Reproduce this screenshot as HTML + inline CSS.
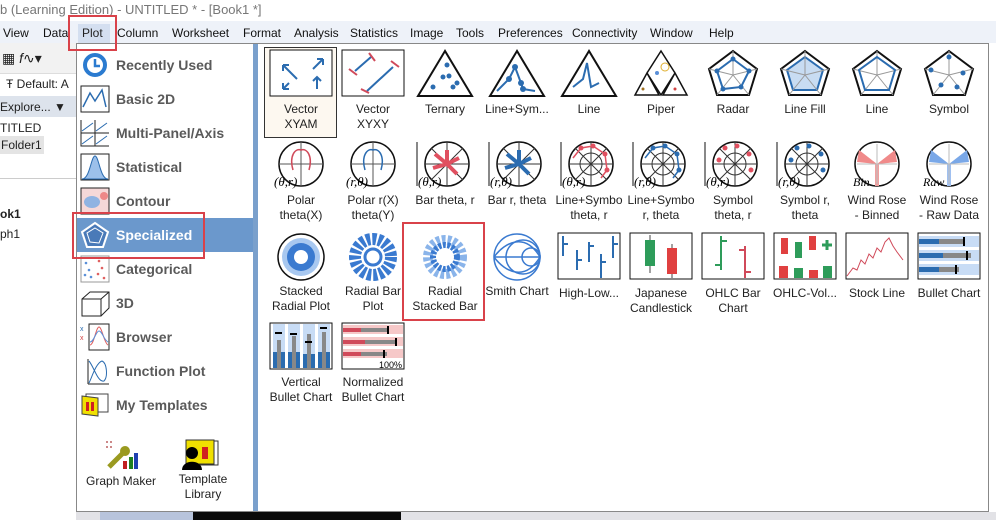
<!DOCTYPE html>
<html><head><meta charset="utf-8"><style>
*{margin:0;padding:0;box-sizing:border-box}
body{width:996px;height:520px;overflow:hidden;background:#fff;font-family:"Liberation Sans",sans-serif;position:relative;font-size:12px;color:#222}
.a{position:absolute}
.menu span{position:absolute;top:26px;font-size:12px;color:#111}
.li{position:absolute;left:80px;width:30px;height:28px}
.lt{position:absolute;left:116px;font-weight:bold;font-size:14px;color:#5a5a5a}
.cell{position:absolute;width:72px;text-align:center;font-size:12px;color:#222;line-height:15px}
.cell svg{display:block;margin:0 auto}
.red{position:absolute;border:2px solid #d9424a}
</style></head><body>
<div class="a" style="left:0;top:0;width:996px;height:20px;background:#fff;color:#777;font-size:13px;padding:2px 0 0 0">b (Learning Edition) - UNTITLED * - [Book1 *]</div>
<div class="a" style="left:0;top:21px;width:996px;height:22px;background:#eef2f9"></div>
<div class="menu">
<span style="left:3px">View</span><span style="left:43px">Data</span><span style="left:82px">Plot</span><span style="left:117px">Column</span><span style="left:172px">Worksheet</span><span style="left:243px">Format</span><span style="left:294px">Analysis</span><span style="left:350px">Statistics</span><span style="left:410px">Image</span><span style="left:456px">Tools</span><span style="left:498px">Preferences</span><span style="left:572px">Connectivity</span><span style="left:650px">Window</span><span style="left:709px">Help</span>
</div>
<div class="a" style="left:78px;top:24px;width:32px;height:19px;background:#d4dff0"></div>
<span class="a" style="left:82px;top:26px;font-size:12px">Plot</span>
<div class="a" style="left:0;top:43px;width:76px;height:30px;background:#f2f2f2"></div>
<div class="a" style="left:2px;top:50px;font-size:14px">▦ <i>f</i>∿▾</div>
<div class="a" style="left:0;top:73px;width:76px;height:22px;background:#fff;border-top:1px solid #ddd"></div>
<div class="a" style="left:6px;top:77px;font-size:12px">Ŧ Default: A</div>
<div class="a" style="left:0;top:96px;width:76px;height:21px;background:#dde3ec"></div>
<div class="a" style="left:0;top:100px;font-size:12px">Explore... ▼</div>
<div class="a" style="left:0;top:121px;font-size:12px">TITLED</div>
<div class="a" style="left:0;top:136px;width:44px;height:18px;background:#e4e4e4"></div>
<div class="a" style="left:1px;top:138px;font-size:12px">Folder1</div>
<div class="a" style="left:0;top:178px;width:76px;height:1px;background:#ccc"></div>
<div class="a" style="left:0;top:207px;font-size:12px;font-weight:bold">ok1</div>
<div class="a" style="left:0;top:227px;font-size:12px">ph1</div>
<div class="a" style="left:76px;top:512px;width:920px;height:8px;background:#e2e2e6"></div>
<div class="a" style="left:100px;top:512px;width:93px;height:8px;background:#b8c4dc"></div>
<div class="a" style="left:193px;top:512px;width:208px;height:8px;background:#0a0a0a"></div>
<div class="a" style="left:76px;top:43px;width:913px;height:469px;background:#fff;border:1px solid #888"></div>
<div class="a" style="left:253px;top:44px;width:5px;height:467px;background:#7aa0cc"></div>
<div class="a" style="left:77px;top:218px;width:176px;height:34px;background:#6b98cc"></div>
<svg class="li" style="top:51px" viewBox="0 0 30 28"><circle cx="15" cy="14" r="10" fill="none" stroke="#2b7bd0" stroke-width="4"/><path d="M15 8v7h5" stroke="#2b7bd0" stroke-width="2.5" fill="none"/></svg>
<div class="lt" style="top:57px">Recently Used</div>
<svg class="li" style="top:85px" viewBox="0 0 30 28"><rect x="1" y="1" width="28" height="26" fill="#fff" stroke="#222"/><path d="M3 22 L10 8 L15 16 L22 5 L26 22" stroke="#2b6cb0" fill="none" stroke-width="1.5"/></svg>
<div class="lt" style="top:91px">Basic 2D</div>
<svg class="li" style="top:119px" viewBox="0 0 30 28"><path d="M1 1v26h28M15 1v26M1 14h28" stroke="#222" fill="none"/><path d="M2 12l11-8M2 25l11-8M16 12l11-8M16 25l11-8" stroke="#2b6cb0" fill="none"/></svg>
<div class="lt" style="top:125px">Multi-Panel/Axis</div>
<svg class="li" style="top:153px" viewBox="0 0 30 28"><rect x="1" y="1" width="28" height="26" fill="#fff" stroke="#222"/><path d="M2 26 C10 26 11 3 15 3 C19 3 20 26 28 26Z" fill="#9cc0ea" stroke="#2b6cb0"/></svg>
<div class="lt" style="top:159px">Statistical</div>
<svg class="li" style="top:187px" viewBox="0 0 30 28"><rect x="1" y="1" width="28" height="26" fill="#f5d8d8" stroke="#222"/><ellipse cx="12" cy="15" rx="8" ry="6" fill="#8fb3e2"/><ellipse cx="24" cy="9" rx="4" ry="4" fill="#e88"/></svg>
<div class="lt" style="top:193px">Contour</div>
<svg class="li" style="top:221px" viewBox="0 0 30 28"><path d="M15 2 L28 11 L23 26 L7 26 L2 11Z" fill="#4a7ab8" stroke="#fff" stroke-width="2"/><path d="M15 7 L23 12 L19 22 L10 21 L7 12Z" fill="none" stroke="#fff"/></svg>
<div class="lt" style="top:227px;color:#fff">Specialized</div>
<svg class="li" style="top:255px" viewBox="0 0 30 28"><rect x="1" y="1" width="28" height="26" fill="#fff" stroke="#999"/><g fill="#5a8fd8"><circle cx="6" cy="8" r="1.3"/><circle cx="9" cy="15" r="1.3"/><circle cx="5" cy="20" r="1.3"/><circle cx="11" cy="22" r="1.3"/></g><g fill="#e06060"><circle cx="19" cy="6" r="1.3"/><circle cx="22" cy="13" r="1.3"/><circle cx="18" cy="19" r="1.3"/><circle cx="24" cy="23" r="1.3"/></g></svg>
<div class="lt" style="top:261px">Categorical</div>
<svg class="li" style="top:289px" viewBox="0 0 30 28"><path d="M2 10 L10 3 L29 3 L29 19 L21 27 L2 27Z M2 10 L21 10 L21 27 M21 10 L29 3" fill="#fff" stroke="#222"/></svg>
<div class="lt" style="top:295px">3D</div>
<svg class="li" style="top:323px" viewBox="0 0 30 28"><rect x="9" y="1" width="20" height="26" fill="#fff" stroke="#222"/><path d="M10 22 C14 22 16 4 19 4 C22 4 24 20 28 22" stroke="#e06060" fill="none"/><path d="M10 19 C14 19 16 8 19 8 C22 8 24 17 28 19" stroke="#5a8fd8" fill="none"/><text x="0" y="8" font-size="7" fill="#2b6cb0">x</text><text x="0" y="17" font-size="7" fill="#d04040">x</text></svg>
<div class="lt" style="top:329px">Browser</div>
<svg class="li" style="top:357px" viewBox="0 0 30 28"><path d="M8 27H29M8 2v25" stroke="#222" fill="none"/><path d="M9 4 C14 10 18 26 24 24 C28 20 27 6 22 4 C16 6 12 20 9 26" stroke="#2b6cb0" fill="none"/></svg>
<div class="lt" style="top:363px">Function Plot</div>
<svg class="li" style="top:391px" viewBox="0 0 30 28"><rect x="6" y="3" width="22" height="18" fill="#fff" stroke="#444"/><path d="M2 5 L18 7 L18 25 L2 23Z" fill="#f0e000" stroke="#444"/><rect x="6" y="11" width="3" height="9" fill="#d02020"/><rect x="11" y="11" width="3" height="9" fill="#d02020"/></svg>
<div class="lt" style="top:397px">My Templates</div>
<svg class="a" style="left:103px;top:439px" width="36" height="32" viewBox="0 0 36 32"><g fill="#c88"><rect x="3" y="2" width="2" height="2"/><rect x="7" y="2" width="2" height="2"/><rect x="3" y="7" width="2" height="2"/><rect x="7" y="7" width="2" height="2"/></g><path d="M6 28 L20 14" stroke="#9a9a20" stroke-width="5"/><circle cx="22" cy="12" r="5" fill="#9a9a20"/><rect x="20" y="22" width="4" height="8" fill="#c02020"/><rect x="26" y="18" width="4" height="12" fill="#208020"/><rect x="31" y="14" width="4" height="16" fill="#2040b0"/></svg>
<div class="a" style="left:86px;top:474px;font-size:12px">Graph Maker</div>
<svg class="a" style="left:180px;top:439px" width="40" height="32" viewBox="0 0 40 32"><rect x="10" y="2" width="28" height="24" fill="#fff" stroke="#333"/><rect x="6" y="1" width="28" height="24" fill="#f0e000" stroke="#333"/><rect x="22" y="8" width="6" height="12" fill="#d02020"/><circle cx="12" cy="14" r="6" fill="#000"/><path d="M2 31 C2 20 22 20 22 31Z" fill="#000"/></svg>
<div class="a" style="left:178px;top:472px;font-size:12px;text-align:center;width:50px;line-height:15px">Template Library</div>
<div class="a" style="left:264px;top:47px;width:73px;height:91px;border:1px solid #333;background:#fdf8f0"></div>
<!-- row 1 -->
<div class="cell" style="left:265px;top:49px"><svg width="64" height="48"><rect x="1" y="1" width="62" height="46" fill="#fff" stroke="#111"/><g stroke="#2b6cb0" stroke-width="2" fill="none"><path d="M28 30 L14 16M14 16v6M14 16h6M44 20 L54 10M54 10v6M54 10h-6M14 40 L20 34M14 40h6M14 40v-6M48 40 L48 28M44 32l4-4 4 4"/></g></svg><div style="margin-top:5px">Vector<br>XYAM</div></div>
<div class="cell" style="left:337px;top:49px"><svg width="64" height="48"><rect x="1" y="1" width="62" height="46" fill="#fff" stroke="#111"/><g stroke="#2b6cb0" stroke-width="2"><path d="M14 22 L30 8M26 42 L52 18"/></g><g stroke="#d04a5a" stroke-width="2"><path d="M8 20l8 6M28 4l6 8M20 40l8 4M50 12l8 6"/></g></svg><div style="margin-top:5px">Vector<br>XYXY</div></div>
<div class="cell" style="left:409px;top:49px"><svg width="64" height="48"><path d="M32 2 L5 47 L59 47Z" fill="#fff" stroke="#111" stroke-width="2"/><g fill="#2b6cb0"><circle cx="34" cy="16" r="2.5"/><circle cx="30" cy="28" r="2.5"/><circle cx="36" cy="27" r="2.5"/><circle cx="20" cy="38" r="2.5"/><circle cx="40" cy="38" r="2.5"/><circle cx="44" cy="34" r="2.5"/></g></svg><div style="margin-top:5px">Ternary</div></div>
<div class="cell" style="left:481px;top:49px"><svg width="64" height="48"><path d="M32 2 L5 47 L59 47Z" fill="#fff" stroke="#111" stroke-width="2"/><path d="M12 42 L24 30 L30 18 L36 34 L38 40 L50 42" stroke="#2b6cb0" stroke-width="2" fill="none"/><g fill="#2b6cb0"><circle cx="24" cy="30" r="3"/><circle cx="30" cy="18" r="3"/><circle cx="36" cy="34" r="3"/><circle cx="38" cy="40" r="3"/></g></svg><div style="margin-top:5px">Line+Sym...</div></div>
<div class="cell" style="left:553px;top:49px"><svg width="64" height="48"><path d="M32 2 L5 47 L59 47Z" fill="#fff" stroke="#111" stroke-width="2"/><path d="M16 38 L26 30 L30 14 L34 38 L42 34" stroke="#2b6cb0" stroke-width="2" fill="none"/></svg><div style="margin-top:5px">Line</div></div>
<div class="cell" style="left:625px;top:49px"><svg width="64" height="48"><path d="M32 2 L46 24 L32 46 L18 24Z M18 24 L6 46 L30 46Z M46 24 L34 46 L58 46Z" fill="#fff" stroke="#111" stroke-width="1.5"/><circle cx="36" cy="18" r="4" fill="none" stroke="#e0b030"/><circle cx="28" cy="24" r="2" fill="#5a8fd8"/><circle cx="14" cy="40" r="1.5" fill="#a07020"/><circle cx="46" cy="40" r="1.5" fill="#d04040"/></svg><div style="margin-top:5px">Piper</div></div>
<div class="cell" style="left:697px;top:49px"><svg width="64" height="48"><path d="M32 2 L56 20 L48 46 L16 46 L8 20Z" fill="#fff" stroke="#111" stroke-width="2"/><path d="M32 2v24M56 20L32 26M48 46L32 26M16 46L32 26M8 20L32 26" stroke="#999"/><path d="M32 10 L48 22 L40 38 L22 40 L16 22Z" fill="none" stroke="#2b6cb0" stroke-width="2"/><g fill="#2b6cb0"><circle cx="32" cy="10" r="2.5"/><circle cx="48" cy="22" r="2.5"/><circle cx="40" cy="38" r="2.5"/><circle cx="22" cy="40" r="2.5"/><circle cx="16" cy="22" r="2.5"/></g></svg><div style="margin-top:5px">Radar</div></div>
<div class="cell" style="left:769px;top:49px"><svg width="64" height="48"><path d="M32 2 L56 20 L48 46 L16 46 L8 20Z" fill="#fff" stroke="#111" stroke-width="2"/><path d="M32 8 L50 21 L44 41 L20 41 L14 21Z" fill="#c8dcf2" stroke="#2b6cb0" stroke-width="2"/><path d="M32 2v24M56 20L32 26M48 46L32 26M16 46L32 26M8 20L32 26" stroke="#999"/></svg><div style="margin-top:5px">Line Fill</div></div>
<div class="cell" style="left:841px;top:49px"><svg width="64" height="48"><path d="M32 2 L56 20 L48 46 L16 46 L8 20Z" fill="#fff" stroke="#111" stroke-width="2"/><path d="M32 2v24M56 20L32 26M48 46L32 26M16 46L32 26M8 20L32 26" stroke="#999"/><path d="M32 8 L50 21 L44 41 L20 41 L14 21Z" fill="none" stroke="#2b6cb0" stroke-width="2"/></svg><div style="margin-top:5px">Line</div></div>
<div class="cell" style="left:913px;top:49px"><svg width="64" height="48"><path d="M32 2 L56 20 L48 46 L16 46 L8 20Z" fill="#fff" stroke="#111" stroke-width="2"/><path d="M32 2v24M56 20L32 26M48 46L32 26M16 46L32 26M8 20L32 26" stroke="#999"/><g fill="#2b6cb0"><circle cx="32" cy="8" r="2.5"/><circle cx="46" cy="24" r="2.5"/><circle cx="40" cy="38" r="2.5"/><circle cx="24" cy="36" r="2.5"/><circle cx="14" cy="21" r="2.5"/></g></svg><div style="margin-top:5px">Symbol</div></div>
<!-- row 2 -->
<div class="cell" style="left:265px;top:140px"><svg width="64" height="50"><circle cx="32" cy="24" r="22" fill="#fff" stroke="#111" stroke-width="1.5"/><path d="M32 2v44M10 24h44" stroke="#555"/><path d="M24 30 C20 16 26 8 32 10 C38 8 44 16 40 30" stroke="#d04a5a" fill="none" stroke-width="1.5"/><text x="5" y="46" font-size="13" font-style="italic" font-family="Liberation Serif">(θ,r)</text></svg><div style="margin-top:3px">Polar<br>theta(X)</div></div>
<div class="cell" style="left:337px;top:140px"><svg width="64" height="50"><circle cx="32" cy="24" r="22" fill="#fff" stroke="#111" stroke-width="1.5"/><path d="M32 2v44M10 24h44" stroke="#555"/><path d="M24 30 C20 16 26 8 32 10 C38 8 44 16 40 30" stroke="#2b6cb0" fill="none" stroke-width="1.5"/><text x="5" y="46" font-size="13" font-style="italic" font-family="Liberation Serif">(r,θ)</text></svg><div style="margin-top:3px">Polar r(X)<br>theta(Y)</div></div>
<div class="cell" style="left:409px;top:140px"><svg width="64" height="50"><path d="M4 2v44" stroke="#111"/><circle cx="34" cy="24" r="22" fill="#fff" stroke="#111" stroke-width="1.5"/><path d="M34 2v44M12 24h44M18 8l32 32M50 8L18 40" stroke="#333"/><g stroke="#e05060" stroke-width="4"><path d="M34 24 L22 14M34 24 L46 18M34 24 L20 28M34 24 L44 34M34 24V10"/></g><text x="5" y="46" font-size="13" font-style="italic" font-family="Liberation Serif">(θ,r)</text></svg><div style="margin-top:3px">Bar theta, r</div></div>
<div class="cell" style="left:481px;top:140px"><svg width="64" height="50"><path d="M4 2v44" stroke="#111"/><circle cx="34" cy="24" r="22" fill="#fff" stroke="#111" stroke-width="1.5"/><path d="M34 2v44M12 24h44M18 8l32 32M50 8L18 40" stroke="#333"/><g stroke="#2b6cb0" stroke-width="4"><path d="M34 24 L22 14M34 24 L46 18M34 24 L20 28M34 24 L44 34M34 24V10"/></g><text x="5" y="46" font-size="13" font-style="italic" font-family="Liberation Serif">(r,θ)</text></svg><div style="margin-top:3px">Bar r, theta</div></div>
<div class="cell" style="left:553px;top:140px"><svg width="64" height="50"><path d="M4 2v44" stroke="#111"/><circle cx="34" cy="24" r="22" fill="#fff" stroke="#111" stroke-width="1.5"/><path d="M34 2v44M12 24h44M18 8l32 32M50 8L18 40" stroke="#333"/><circle cx="34" cy="24" r="11" fill="none" stroke="#333"/><path d="M16 18 L24 8 L36 6 L48 14 L50 30 L44 38" stroke="#e05060" fill="none" stroke-width="1.5"/><g fill="#e05060"><circle cx="24" cy="8" r="2.5"/><circle cx="36" cy="6" r="2.5"/><circle cx="48" cy="14" r="2.5"/><circle cx="50" cy="30" r="2.5"/></g><text x="5" y="46" font-size="13" font-style="italic" font-family="Liberation Serif">(θ,r)</text></svg><div style="margin-top:3px;white-space:nowrap;overflow:hidden">Line+Symbo<br>theta, r</div></div>
<div class="cell" style="left:625px;top:140px"><svg width="64" height="50"><path d="M4 2v44" stroke="#111"/><circle cx="34" cy="24" r="22" fill="#fff" stroke="#111" stroke-width="1.5"/><path d="M34 2v44M12 24h44M18 8l32 32M50 8L18 40" stroke="#333"/><circle cx="34" cy="24" r="11" fill="none" stroke="#333"/><path d="M16 18 L24 8 L36 6 L48 14 L50 30 L44 38" stroke="#2b6cb0" fill="none" stroke-width="1.5"/><g fill="#2b6cb0"><circle cx="24" cy="8" r="2.5"/><circle cx="36" cy="6" r="2.5"/><circle cx="48" cy="14" r="2.5"/><circle cx="50" cy="30" r="2.5"/></g><text x="5" y="46" font-size="13" font-style="italic" font-family="Liberation Serif">(r,θ)</text></svg><div style="margin-top:3px;white-space:nowrap;overflow:hidden">Line+Symbo<br>r, theta</div></div>
<div class="cell" style="left:697px;top:140px"><svg width="64" height="50"><path d="M4 2v44" stroke="#111"/><circle cx="34" cy="24" r="22" fill="#fff" stroke="#111" stroke-width="1.5"/><path d="M34 2v44M12 24h44M18 8l32 32M50 8L18 40" stroke="#333"/><circle cx="34" cy="24" r="11" fill="none" stroke="#333"/><g fill="#e05060"><circle cx="24" cy="8" r="2.5"/><circle cx="36" cy="6" r="2.5"/><circle cx="48" cy="14" r="2.5"/><circle cx="50" cy="30" r="2.5"/><circle cx="18" cy="20" r="2.5"/></g><text x="5" y="46" font-size="13" font-style="italic" font-family="Liberation Serif">(θ,r)</text></svg><div style="margin-top:3px">Symbol<br>theta, r</div></div>
<div class="cell" style="left:769px;top:140px"><svg width="64" height="50"><path d="M4 2v44" stroke="#111"/><circle cx="34" cy="24" r="22" fill="#fff" stroke="#111" stroke-width="1.5"/><path d="M34 2v44M12 24h44M18 8l32 32M50 8L18 40" stroke="#333"/><circle cx="34" cy="24" r="11" fill="none" stroke="#333"/><g fill="#2b6cb0"><circle cx="24" cy="8" r="2.5"/><circle cx="36" cy="6" r="2.5"/><circle cx="48" cy="14" r="2.5"/><circle cx="50" cy="30" r="2.5"/><circle cx="18" cy="20" r="2.5"/></g><text x="5" y="46" font-size="13" font-style="italic" font-family="Liberation Serif">(r,θ)</text></svg><div style="margin-top:3px">Symbol r,<br>theta</div></div>
<div class="cell" style="left:841px;top:140px"><svg width="64" height="50"><circle cx="32" cy="24" r="22" fill="#fff" stroke="#111" stroke-width="1.5"/><path d="M32 24 L14 10 L12 22Z M32 24 L50 10 L52 22Z" fill="#f08a8a"/><path d="M30 24h4v22h-4Z" fill="#f0a0a0"/><path d="M32 4v40M12 24h40" stroke="#bbb"/><text x="8" y="46" font-size="12" font-style="italic" font-family="Liberation Serif">Bin</text></svg><div style="margin-top:3px">Wind Rose<br>- Binned</div></div>
<div class="cell" style="left:913px;top:140px"><svg width="64" height="50"><circle cx="32" cy="24" r="22" fill="#fff" stroke="#111" stroke-width="1.5"/><path d="M32 24 L14 10 L12 22Z M32 24 L50 10 L52 22Z" fill="#7aa8e8"/><path d="M30 24h4v22h-4Z" fill="#a0c0f0"/><path d="M32 4v40M12 24h40" stroke="#bbb"/><text x="6" y="46" font-size="12" font-style="italic" font-family="Liberation Serif">Raw</text></svg><div style="margin-top:3px">Wind Rose<br>- Raw Data</div></div>
<!-- row 3 -->
<div class="cell" style="left:265px;top:232px"><svg width="64" height="50"><circle cx="32" cy="25" r="23" fill="#fff" stroke="#111" stroke-width="1.5"/><circle cx="32" cy="25" r="19" fill="#a8c8f0"/><circle cx="32" cy="25" r="14" fill="#3a7ad0"/><circle cx="32" cy="25" r="7" fill="#fff"/></svg><div style="margin-top:2px">Stacked<br>Radial Plot</div></div>
<div class="cell" style="left:337px;top:232px"><svg width="64" height="50"><circle cx="32" cy="25" r="18" fill="none" stroke="#3a7ad0" stroke-width="12" stroke-dasharray="4 2"/><circle cx="32" cy="25" r="8" fill="#fff" stroke="#3a7ad0" stroke-width="3"/></svg><div style="margin-top:2px">Radial Bar<br>Plot</div></div>
<div class="cell" style="left:409px;top:232px"><svg width="64" height="50"><circle cx="32" cy="25" r="17" fill="none" stroke="#8ab4ea" stroke-width="10" stroke-dasharray="3.5 2"/><circle cx="32" cy="25" r="12" fill="none" stroke="#3a7ad0" stroke-width="6" stroke-dasharray="3 1.5"/><circle cx="32" cy="25" r="7" fill="#fff"/></svg><div style="margin-top:2px">Radial<br>Stacked Bar</div></div>
<div class="cell" style="left:481px;top:232px"><svg width="64" height="50"><g fill="none" stroke="#3a7ad0" stroke-width="1.5"><circle cx="32" cy="25" r="23"/><circle cx="38" cy="25" r="17"/><circle cx="46" cy="25" r="9"/><path d="M9 25h46M55 25 C40 0 20 10 9 25M55 25C40 50 20 40 9 25"/></g></svg><div style="margin-top:2px">Smith Chart</div></div>
<div class="cell" style="left:553px;top:232px"><svg width="64" height="48"><rect x="1" y="1" width="62" height="46" fill="#fff" stroke="#111"/><g stroke="#2b6cb0" stroke-width="2"><path d="M6 4v20M6 12h5M20 18v20M20 28h5M32 10v20M32 14h5M44 22v24M44 30h5M56 4v22M56 12h5"/></g></svg><div style="margin-top:6px">High-Low...</div></div>
<div class="cell" style="left:625px;top:232px"><svg width="64" height="48"><rect x="1" y="1" width="62" height="46" fill="#fff" stroke="#111"/><path d="M21 3v38M43 12v34" stroke="#444"/><rect x="16" y="8" width="10" height="26" fill="#2e9c5a"/><rect x="38" y="16" width="10" height="26" fill="#e04040"/></svg><div style="margin-top:6px">Japanese<br>Candlestick</div></div>
<div class="cell" style="left:697px;top:232px"><svg width="64" height="48"><rect x="1" y="1" width="62" height="46" fill="#fff" stroke="#111"/><g stroke="#2e9c5a" stroke-width="2"><path d="M20 4v34M20 9h6M20 33h-6"/></g><g stroke="#d04a5a" stroke-width="2"><path d="M44 14v32M44 18h-6M44 40h6"/></g></svg><div style="margin-top:6px">OHLC Bar<br>Chart</div></div>
<div class="cell" style="left:769px;top:232px"><svg width="64" height="48"><rect x="1" y="1" width="62" height="46" fill="#fff" stroke="#111"/><rect x="8" y="6" width="7" height="16" fill="#e04040"/><rect x="22" y="10" width="7" height="16" fill="#2e9c5a"/><rect x="36" y="4" width="7" height="14" fill="#e04040"/><path d="M54 8v10M49 13h10" stroke="#2e9c5a" stroke-width="3"/><rect x="6" y="34" width="9" height="12" fill="#e04040"/><rect x="21" y="36" width="9" height="10" fill="#2e9c5a"/><rect x="36" y="38" width="9" height="8" fill="#e04040"/><rect x="50" y="34" width="9" height="12" fill="#2e9c5a"/></svg><div style="margin-top:6px">OHLC-Vol...</div></div>
<div class="cell" style="left:841px;top:232px"><svg width="64" height="48"><rect x="1" y="1" width="62" height="46" fill="#fff" stroke="#111"/><path d="M2 44 L8 36 L12 38 L16 28 L20 32 L24 22 L28 26 L32 16 L36 20 L40 10 L44 6 L48 14 L52 20 L58 28" stroke="#d04a5a" fill="none"/></svg><div style="margin-top:6px">Stock Line</div></div>
<div class="cell" style="left:913px;top:232px"><svg width="64" height="48"><rect x="1" y="1" width="62" height="46" fill="#fff" stroke="#111"/><g><rect x="2" y="4" width="60" height="11" fill="#c8dcf5"/><rect x="2" y="18" width="60" height="11" fill="#c8dcf5"/><rect x="2" y="32" width="60" height="11" fill="#c8dcf5"/><rect x="2" y="7" width="45" height="5" fill="#888"/><rect x="2" y="21" width="52" height="5" fill="#888"/><rect x="2" y="35" width="40" height="5" fill="#888"/><rect x="2" y="7" width="20" height="5" fill="#2b6cb0"/><rect x="2" y="21" width="24" height="5" fill="#2b6cb0"/><rect x="2" y="35" width="20" height="5" fill="#2b6cb0"/><rect x="46" y="5" width="2" height="9" fill="#000"/><rect x="49" y="19" width="2" height="9" fill="#000"/><rect x="38" y="33" width="2" height="9" fill="#000"/></g></svg><div style="margin-top:6px">Bullet Chart</div></div>
<!-- row 4 -->
<div class="cell" style="left:265px;top:322px"><svg width="64" height="48"><rect x="1" y="1" width="62" height="46" fill="#fff" stroke="#111"/><g fill="#c8dcf5"><rect x="4" y="2" width="12" height="44"/><rect x="19" y="2" width="12" height="44"/><rect x="34" y="2" width="12" height="44"/><rect x="49" y="2" width="12" height="44"/></g><g fill="#2b6cb0"><rect x="4" y="30" width="12" height="16"/><rect x="19" y="30" width="12" height="16"/><rect x="34" y="32" width="12" height="14"/><rect x="49" y="30" width="12" height="16"/></g><g fill="#888"><rect x="8" y="18" width="4" height="28"/><rect x="23" y="14" width="4" height="32"/><rect x="38" y="12" width="4" height="34"/><rect x="53" y="10" width="4" height="36"/></g><g fill="#000"><rect x="6" y="10" width="7" height="2"/><rect x="21" y="11" width="7" height="2"/><rect x="36" y="19" width="7" height="2"/><rect x="51" y="5" width="7" height="2"/></g></svg><div style="margin-top:5px">Vertical<br>Bullet Chart</div></div>
<div class="cell" style="left:337px;top:322px"><svg width="64" height="48"><rect x="1" y="1" width="62" height="46" fill="#fff" stroke="#111"/><g fill="#f6c8c8"><rect x="2" y="3" width="60" height="9"/><rect x="2" y="15" width="60" height="9"/><rect x="2" y="27" width="60" height="9"/></g><g fill="#888"><rect x="2" y="6" width="44" height="4"/><rect x="2" y="18" width="52" height="4"/><rect x="2" y="30" width="44" height="4"/></g><g fill="#d04a5a"><rect x="2" y="6" width="18" height="4"/><rect x="2" y="18" width="22" height="4"/><rect x="2" y="30" width="18" height="4"/></g><g fill="#000"><rect x="46" y="4" width="2" height="8"/><rect x="54" y="16" width="2" height="8"/><rect x="42" y="28" width="2" height="8"/></g><text x="38" y="46" font-size="9" fill="#000">100%</text></svg><div style="margin-top:5px">Normalized<br>Bullet Chart</div></div>
<div class="red" style="left:68px;top:15px;width:49px;height:36px"></div>
<div class="red" style="left:72px;top:212px;width:133px;height:47px"></div>
<div class="red" style="left:402px;top:222px;width:83px;height:99px"></div>
</body></html>
